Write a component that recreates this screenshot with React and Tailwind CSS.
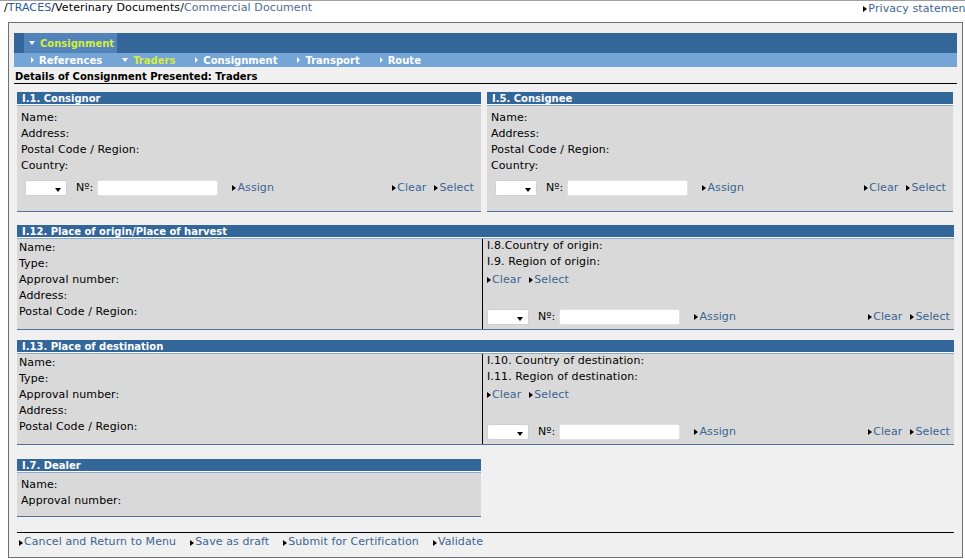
import React from 'react';

// small black bullet in front of every link
function Tri() {
  return (
    <span className="inline-block w-0 h-0 border-y-[3.5px] border-y-transparent border-l-[4px] border-l-black mr-[1px]" />
  );
}

function Lnk({ children }) {
  return (
    <span className="inline-flex items-center whitespace-nowrap text-[#3b6593]">
      <Tri />
      {children}
    </span>
  );
}

function TabRight() {
  return <span className="inline-block w-0 h-0 border-y-[3px] border-y-transparent border-l-[3px] border-l-white" />;
}

function TabDown() {
  return <span className="inline-block w-0 h-0 border-x-[3px] border-x-transparent border-t-[4px] border-t-white" />;
}

function Header({ title }) {
  return (
    <>
      <div className="h-[12px] bg-[#336699] text-white font-bold text-[10px] leading-[14px] pl-[5px] tracking-normal overflow-hidden">
        {title}
      </div>
      <div className="h-px bg-white" />
      <div className="h-px bg-[#8eaacb]" />
    </>
  );
}

function Row({ children }) {
  return <div className="h-[16px] leading-[16px] whitespace-nowrap">{children}</div>;
}

function Controls({ left = 4, right = 7 }) {
  return (
    <div className="h-[20px] flex items-center" style={{ paddingLeft: left, paddingRight: right }}>
      <div className="w-[42px] h-[16px] bg-white border border-[#d0d0d0] rounded-[2px] flex items-center justify-end pr-[5px]">
        <span className="inline-block w-0 h-0 border-x-[3.5px] border-x-transparent border-t-[4px] border-t-black mt-[4px]" />
      </div>
      <span className="ml-[9px]">Nº:</span>
      <div className="ml-[4px] w-[121px] h-[16px] bg-white border border-[#e2e2e2] rounded-[2px]" />
      <span className="ml-[14px]">
        <Lnk>Assign</Lnk>
      </span>
      <div className="flex-1" />
      <div className="flex gap-[8px]">
        <Lnk>Clear</Lnk>
        <Lnk>Select</Lnk>
      </div>
    </div>
  );
}

function Party({ title, width }) {
  return (
    <div className={width}>
      <Header title={title} />
      <div className="h-[106px] bg-[#d9d9d9] border-b border-[#4e739b] pl-[4px] pt-[4px]">
        <Row>Name:</Row>
        <Row>Address:</Row>
        <Row>Postal Code / Region:</Row>
        <Row>Country:</Row>
        <div className="mt-[4px]">
          <Controls />
        </div>
      </div>
    </div>
  );
}

function Place({ title, countryLabel, regionLabel, className }) {
  return (
    <div className={className}>
      <Header title={title} />
      <div className="h-[91px] bg-[#d9d9d9] border-b border-[#4e739b] flex">
        <div className="w-[466px] border-r border-black pl-[2px] pt-[1px]">
          <Row>Name:</Row>
          <Row>Type:</Row>
          <Row>Approval number:</Row>
          <Row>Address:</Row>
          <Row>Postal Code / Region:</Row>
        </div>
        <div className="flex-1 pl-[4px] -mt-[1px]">
          <Row>{countryLabel}</Row>
          <Row>{regionLabel}</Row>
          <div className="h-[18px] flex items-center gap-[8px] mt-[1px]">
            <Lnk>Clear</Lnk>
            <Lnk>Select</Lnk>
          </div>
          <div className="mt-[18px]">
            <Controls left={0} right={4} />
          </div>
        </div>
      </div>
    </div>
  );
}

export default function App() {
  const subTabs = [
    { label: 'References', active: false },
    { label: 'Traders', active: true },
    { label: 'Consignment', active: false },
    { label: 'Transport', active: false },
    { label: 'Route', active: false },
  ];

  return (
    <div className="w-[965px] h-[559px] overflow-hidden bg-white border-t border-[#a0a0a0] font-['DejaVu_Sans',sans-serif] text-[11px] tracking-[0.1px] text-black">
      {/* breadcrumb */}
      <div className="w-[980px] h-[21px] flex justify-between pl-[4px] pr-[10px] leading-[14px]">
        <div className="whitespace-nowrap">
          /<span className="text-[#2b5d9b]">TRACES</span>/Veterinary Documents/
          <span className="text-[#4a6e92]">Commercial Document</span>
        </div>
        <div className="mt-[1px]">
          <Lnk>Privacy statement</Lnk>
        </div>
      </div>

      {/* frame */}
      <div className="ml-[8px] w-[955px] h-[536px] border border-[#707070] bg-[#f0f0f0] pt-[10px] px-[5px]">
        <div className="h-[20px] bg-[#336699] flex pl-[10px]">
          <div className="w-[93px] bg-[#5383bb] flex items-center pl-[5px] gap-[5px] font-bold text-[10px] text-[#d4ee3c] tracking-normal">
            <TabDown />
            Consignment
          </div>
        </div>
        <div className="h-[14px] bg-[#75a5d6] flex items-center pl-[17px] gap-[20px] font-bold text-[10px] text-white tracking-normal">
          {subTabs.map((t) => (
            <div key={t.label} className="flex items-center gap-[5px]">
              {t.active ? <TabDown /> : <TabRight />}
              <span className={t.active ? 'text-[#d4ee3c]' : ''}>{t.label}</span>
            </div>
          ))}
        </div>
        <div className="pt-[4px] pl-[1px] leading-[12px] font-bold text-[10px] tracking-normal border-b border-black">
          Details of Consignment Presented: Traders
        </div>

        <div className="px-[3px] pt-[8px]">
          <div className="flex gap-[6px]">
            <Party title="I.1. Consignor" width="w-[464px]" />
            <Party title="I.5. Consignee" width="w-[466px]" />
          </div>

          <Place
            className="mt-[13px]"
            title="I.12. Place of origin/Place of harvest"
            countryLabel="I.8.Country of origin:"
            regionLabel="I.9. Region of origin:"
          />

          <Place
            className="mt-[10px]"
            title="I.13. Place of destination"
            countryLabel="I.10. Country of destination:"
            regionLabel="I.11. Region of destination:"
          />

          <div className="mt-[14px] w-[464px]">
            <Header title="I.7. Dealer" />
            <div className="h-[44px] bg-[#d9d9d9] border-b border-[#4e739b] pl-[4px] pt-[4px]">
              <Row>Name:</Row>
              <Row>Approval number:</Row>
            </div>
          </div>

          <div className="mt-[15px] border-t border-black h-[20px] flex items-center pl-[2px] gap-[14px]">
            <Lnk>Cancel and Return to Menu</Lnk>
            <Lnk>Save as draft</Lnk>
            <Lnk>Submit for Certification</Lnk>
            <Lnk>Validate</Lnk>
          </div>
        </div>
      </div>
    </div>
  );
}
